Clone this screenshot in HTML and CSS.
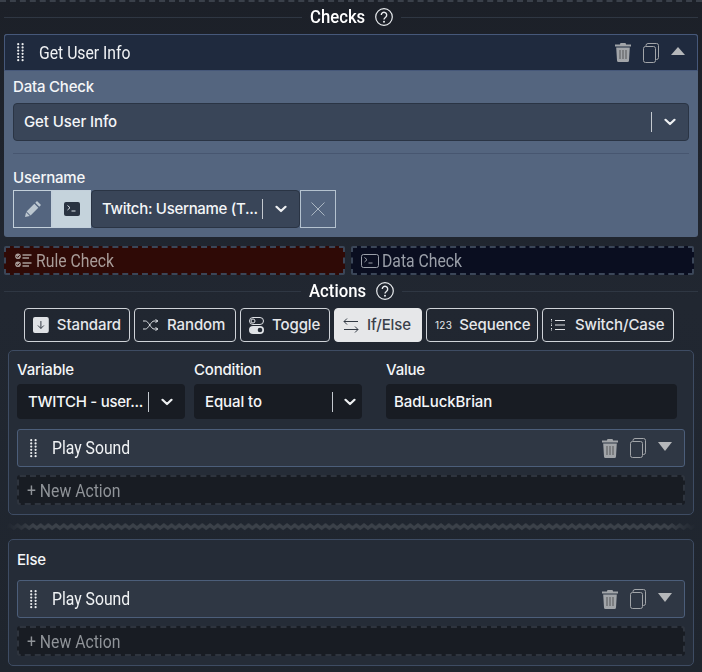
FILE: index.html
```html
<!DOCTYPE html>
<html lang="en">
<head>
<meta charset="utf-8">
<title>Checks and Actions</title>
<link rel="stylesheet" href="styles.css">
</head>
<body>
<svg class="defs" width="0" height="0" aria-hidden="true">
  <defs>
    <symbol id="grip" viewBox="0 0 7 19"><g fill="currentColor"><circle cx="1.200" cy="1.200" r="1.100"/><circle cx="1.200" cy="4.400" r="1.100"/><circle cx="1.200" cy="7.600" r="1.100"/><circle cx="1.200" cy="10.800" r="1.100"/><circle cx="1.200" cy="14" r="1.100"/><circle cx="1.200" cy="17.200" r="1.100"/><circle cx="5.600" cy="1.200" r="1.100"/><circle cx="5.600" cy="4.400" r="1.100"/><circle cx="5.600" cy="7.600" r="1.100"/><circle cx="5.600" cy="10.800" r="1.100"/><circle cx="5.600" cy="14" r="1.100"/><circle cx="5.600" cy="17.200" r="1.100"/></g></symbol>
    <symbol id="trash" viewBox="0 0 16 19"><path fill="currentColor" d="M5.500 0h5l.6 1.400H16v2H0v-2h4.900zM1.200 4.400h13.600l-.8 13a1.600 1.600 0 0 1-1.600 1.600H3.600A1.600 1.600 0 0 1 2 17.400z"/><path stroke="#00000066" stroke-width="1.200" d="M5 7v9M8 7v9M11 7v9"/></symbol>
    <symbol id="copy" viewBox="0 0 16 20"><g fill="none" stroke="currentColor" stroke-width="1"><rect x=".5" y="3.500" width="12" height="16" rx="2"/><path d="M3 3.300V2.500a2 2 0 0 1 2-2h8.500a2 2 0 0 1 2 2v12a2 2 0 0 1-2 2h-.8"/></g></symbol>
    <symbol id="chev" viewBox="0 0 12 8"><path fill="none" stroke="currentColor" stroke-width="2.200" stroke-linecap="round" stroke-linejoin="round" d="M1.500 1.800 6 6l4.500-4.200"/></symbol>
    <symbol id="help" viewBox="0 0 18 18"><circle cx="9" cy="9" r="8.300" fill="none" stroke="currentColor" stroke-width="1.200"/><path fill="none" stroke="currentColor" stroke-width="1.400" d="M6.300 7a2.700 2.700 0 1 1 4.300 2.200C9.600 9.900 9 10.400 9 11.600"/><circle cx="9" cy="13.700" r="1" fill="currentColor"/></symbol>
  </defs>
</svg>
<main class="page">
  <header class="section-title"><h2>Checks</h2><svg class="help"><use href="#help"/></svg></header>

  <section class="check">
    <div class="row-head dark">
      <svg class="grip"><use href="#grip"/></svg>
      <span class="cond-text">Get User Info</span>
      <span class="tools">
        <svg class="i-trash"><use href="#trash"/></svg>
        <svg class="i-copy"><use href="#copy"/></svg>
        <span class="caret up"></span>
      </span>
    </div>
    <div class="check-body">
      <label class="label">Data Check</label>
      <div class="select wide"><span class="select-value">Get User Info</span><span class="select-sep"></span><svg class="chev"><use href="#chev"/></svg></div>
      <hr class="rule">
      <label class="label">Username</label>
      <div class="input-group">
        <span class="mode">
          <svg width="18" height="18" viewBox="0 0 18 18"><path fill="#bcc7d0" d="M13 1l4 4-1.700 1.700-4-4zM10.300 3.700l4 4-7.700 7.700-4-4zM2.100 12.200l3.700 3.700-4.800 1.100z"/></svg>
        </span>
        <span class="mode active">
          <svg width="16" height="14" viewBox="0 0 16 14"><rect width="16" height="14" rx="2" fill="#2a3442"/><path d="M3.500 3.500 6 5.700 3.500 8M7.500 9h4" fill="none" stroke="#dfe6ec" stroke-width="1"/></svg>
        </span>
        <div class="select short"><span class="select-value compact">Twitch: Username (T...</span><span class="select-sep"></span><svg class="chev"><use href="#chev"/></svg></div>
        <span class="clear">
          <svg width="14" height="14" viewBox="0 0 14 14"><path d="M.5.500l13 13M13.500.500l-13 13" stroke="#aab6c2" stroke-width="1" fill="none"/></svg>
        </span>
      </div>
    </div>
  </section>

  <div class="drops">
    <div class="drop drop-rule">
      <svg width="17" height="15" viewBox="0 0 17 15"><g fill="#a89c98"><circle cx="3" cy="3.200" r="2.800"/><circle cx="3" cy="11.200" r="2.800"/></g><path d="M1.500 3.200 2.700 4.400 4.700 2.200M1.500 11.200l1.200 1.200 2-2.200" fill="none" stroke="#2f0a06"/><path d="M7.500 2h9M7.500 5h6.500M7.500 10h9M7.500 13h6.500" stroke="#a89c98" stroke-width="1.400"/></svg>
      <span class="cond-text">Rule Check</span>
    </div>
    <div class="drop drop-data">
      <svg width="18" height="14" viewBox="0 0 18 14"><rect x=".5" y=".5" width="17" height="13" rx="2" fill="none" stroke="#9a9fa8"/><path d="M3.500 3.500 6 5.700 3.500 8M7.500 9h4" fill="none" stroke="#9a9fa8"/></svg>
      <span class="cond-text">Data Check</span>
    </div>
  </div>

  <header class="section-title second"><h2>Actions</h2><svg class="help"><use href="#help"/></svg></header>

  <nav class="tabs">
    <button class="tab tab-standard">
      <svg width="16" height="16" viewBox="0 0 16 16"><rect width="16" height="16" rx="2" fill="#dfe2e6"/><path d="M8 4v7.500M5 8.500 8 11.500l3-3" fill="none" stroke="#333a44" stroke-width="1"/></svg>Standard
    </button>
    <button class="tab tab-random">
      <svg width="16" height="12" viewBox="0 0 16 12"><path d="M0 2h2.500c3 0 5.500 8 8.500 8h3M0 10h2.500c3 0 5.500-8 8.500-8h3M12.500.500 15 2l-2.500 1.500M12.500 8.500 15 10l-2.500 1.500" fill="none" stroke="#dfe2e6" stroke-width="1"/></svg>Random
    </button>
    <button class="tab tab-toggle">
      <svg width="15" height="17" viewBox="0 0 15 17"><rect x=".5" y=".5" width="14" height="7" rx="3.500" fill="none" stroke="#dfe2e6"/><circle cx="4" cy="4" r="2" fill="none" stroke="#dfe2e6"/><rect y="9" width="15" height="8" rx="4" fill="#dfe2e6"/><circle cx="11" cy="13" r="2.300" fill="#232a34"/></svg>Toggle
    </button>
    <button class="tab tab-ifelse selected">
      <svg width="16" height="15" viewBox="0 0 16 15"><path d="M15 3.500H1M4 .5 1 3.500l3 3M1 11.500h14M12 8.500l3 3-3 3" fill="none" stroke="#333a44" stroke-width="1"/></svg>If/Else
    </button>
    <button class="tab tab-sequence">
      <span class="num">123</span>Sequence
    </button>
    <button class="tab tab-switch">
      <svg width="14" height="12" viewBox="0 0 14 12"><path d="M4 1.500h10M4 6h10M4 10.500h10" stroke="#dfe2e6" stroke-width="1"/><path d="M.5 0v3M.5 4.500v3M.5 9v3" stroke="#dfe2e6" stroke-width="1" stroke-dasharray="1 .5"/></svg>Switch/Case
    </button>
  </nav>

  <section class="branch">
    <div class="fields">
      <div class="field f-var"><label class="label">Variable</label><div class="select black"><span class="select-value compact">TWITCH - user...</span><span class="select-sep"></span><svg class="chev"><use href="#chev"/></svg></div></div>
      <div class="field f-cond"><label class="label">Condition</label><div class="select black"><span class="select-value">Equal to</span><span class="select-sep"></span><svg class="chev"><use href="#chev"/></svg></div></div>
      <div class="field f-val"><label class="label">Value</label><div class="select black"><span class="select-value">BadLuckBrian</span></div></div>
    </div>
    <div class="row-head action">
      <svg class="grip"><use href="#grip"/></svg>
      <span class="cond-text">Play Sound</span>
      <span class="tools">
        <svg class="i-trash"><use href="#trash"/></svg>
        <svg class="i-copy"><use href="#copy"/></svg>
        <span class="caret down"></span>
      </span>
    </div>
    <div class="new-action"><span class="cond-text">+ New Action</span></div>
  </section>

  <svg class="zigzag" width="690" height="8" viewBox="0 0 690 8" aria-hidden="true">
    <defs>
      <pattern id="zig" width="7.700" height="8" patternUnits="userSpaceOnUse">
        <path d="M-1 5.800 3.850 2.200 8.700 5.800" fill="none" stroke="#3b4149" stroke-width="3.400"/>
      </pattern>
      <linearGradient id="zigfade"><stop offset="0" stop-color="#000"/><stop offset=".04" stop-color="#fff"/><stop offset=".96" stop-color="#fff"/><stop offset="1" stop-color="#000"/></linearGradient>
      <mask id="zigmask"><rect width="690" height="8" fill="url(#zigfade)"/></mask>
    </defs>
    <rect width="690" height="8" fill="url(#zig)" mask="url(#zigmask)"/>
  </svg>

  <section class="branch else">
    <label class="label else-label">Else</label>
    <div class="row-head action">
      <svg class="grip"><use href="#grip"/></svg>
      <span class="cond-text">Play Sound</span>
      <span class="tools">
        <svg class="i-trash"><use href="#trash"/></svg>
        <svg class="i-copy"><use href="#copy"/></svg>
        <span class="caret down"></span>
      </span>
    </div>
    <div class="new-action"><span class="cond-text">+ New Action</span></div>
  </section>
</main>
</body>
</html>
```

FILE: styles.css
```css
* { box-sizing: border-box; }
html, body { margin: 0; padding: 0; }
body {
  width: 702px;
  height: 672px;
  overflow: hidden;
  background: linear-gradient(#1c2028, #212731 45%, #1f252e);
  font-family: Inter, "Noto Sans", sans-serif;
  color: #fff;
}
.defs { position: absolute; }
.page {
  height: 672px;
  border-top: 2px dashed #3a404a;
  display: flex;
  flex-direction: column;
}

.section-title {
  height: 30px;
  margin-bottom: 2px;
  display: flex;
  align-items: center;
  gap: 8px;
  padding: 0 4px;
  flex: none;
}
.section-title::before, .section-title::after {
  content: "";
  flex: 1;
  height: 1px;
  background: #2f3743;
}
.section-title h2 {
  margin: 0;
  font: 500 19px/24px Roboto, sans-serif;
  width: 57px;
  white-space: nowrap;
  transform: scaleX(.88);
  transform-origin: left;
}
.second { height: 32px; margin-bottom: 1px; }
.second h2 { width: 59px; }
.help { width: 18px; height: 18px; color: #e8ebee; flex: none; }

.cond-text {
  display: inline-block;
  font: 400 18px/24px Roboto, sans-serif;
  transform: scaleX(.875);
  transform-origin: left;
  white-space: nowrap;
}

.check {
  margin: 0 4px;
  height: 203px;
  flex: none;
  background: #54657f;
  border-radius: 3px;
}
.row-head {
  display: flex;
  align-items: center;
  border-radius: 3px;
  border: 1px solid #46587a;
  color: #f0f2f4;
}
.dark {
  height: 37px;
  padding-left: 12px;
  background: #1f2a3e;
  border-radius: 3px 3px 0 0;
  gap: 15px;
}
.grip { width: 7px; height: 19px; color: #eceef0; flex: none; }
.tools {
  margin-left: auto;
  display: flex;
  align-items: center;
  gap: 12px;
  padding-right: 12px;
  color: #a2a5a9;
}
.i-trash { width: 16px; height: 19px; }
.i-copy { width: 16px; height: 20px; }
.caret { width: 0; height: 0; border-left: 7.500px solid transparent; border-right: 7.500px solid transparent; }
.caret.up { border-bottom: 8px solid #b5b7ba; margin-top: -4px; }
.caret.down { border-top: 9px solid #b5b7ba; margin-top: -4px; }

.check-body { padding: 6px 9px 0; }
.label {
  display: block;
  font: 500 15px/20px Inter, sans-serif;
  color: #f4f6f8;
  letter-spacing: -.2px;
}
.select {
  display: flex;
  align-items: center;
  height: 38px;
  background: #394558;
  border: 1px solid #2a3444;
  border-radius: 4px;
  padding: 0 12px 0 10px;
}
.wide { margin-top: 6px; }
.select-value {
  flex: 1;
  min-width: 0;
  white-space: nowrap;
  font: 500 15px/20px Inter, sans-serif;
  letter-spacing: -.1px;
  color: #f4f6f8;
}
.select-value.compact { letter-spacing: -.3px; }
.select-sep { width: 1px; height: 20px; background: #c4c9cf; margin-right: 12px; flex: none; }
.chev { width: 12px; height: 8px; color: #eef0f2; flex: none; }
.rule { margin: 12px 0 14px; border: 0; border-top: 1px solid #475670; }

.input-group { display: flex; height: 38px; margin-top: 2px; }
.mode {
  width: 39px;
  display: flex;
  align-items: center;
  justify-content: center;
  border: 1px solid #c3d0db;
  flex: none;
}
.mode.active { background: #c5d3dc; }
.select.short { width: 209px; flex: none; }
.clear {
  width: 36px;
  display: flex;
  align-items: center;
  justify-content: center;
  border: 1px solid #b4c2cf;
  flex: none;
}

.drops { display: flex; gap: 6px; margin: 9px 8px 0 4px; height: 29px; flex: none; }
.drop {
  display: flex;
  align-items: center;
  gap: 4px;
  padding-left: 9px;
  border: 2px dashed #3b4658;
  border-radius: 2px;
}
.drop-rule { width: 341px; background: #2f0a06; color: #a89c98; }
.drop-data { flex: 1; background: #0a0e20; color: #9a9fa8; padding-left: 8px; gap: 3px; }

.tabs { display: flex; gap: 4px; padding-left: 24px; flex: none; }
.tab {
  height: 34px;
  display: flex;
  align-items: center;
  gap: 8px;
  padding: 0 8px;
  background: transparent;
  border: 1px solid #cfd3d8;
  border-radius: 4px;
  color: #e6e8eb;
  font: 500 15px/20px Inter, sans-serif;
  letter-spacing: -.1px;
}
.tab-standard { width: 106px; }
.tab-random { width: 102px; }
.tab-toggle { width: 90px; }
.tab-ifelse { width: 88px; }
.tab-sequence { width: 112px; gap: 7px; }
.tab-switch { width: 132px; gap: 10px; }
.tab.selected { background: #e6e7e9; color: #3a404a; border-color: #e6e7e9; }
.num { font-size: 10px; letter-spacing: .3px; font-weight: 400; }

.branch {
  margin: 8px 8px 0;
  height: 165px;
  flex: none;
  background: #252c37;
  border: 1px solid #3e4c63;
  border-radius: 5px;
  padding: 9px 8px 0;
}
.fields { display: flex; height: 69px; }
.field { flex: none; }
.f-var { width: 177px; }
.f-cond { width: 192px; }
.f-val { width: 291px; }
.field .label { line-height: 20px; margin-bottom: 4px; }
.f-var .select { width: 168px; }
.f-cond .select { width: 168px; padding-right: 6px; }
.select.black { height: 35px; background: #181c23; border: 0; padding-left: 11px; }
.f-val .select.black { padding-left: 8px; }
.f-cond .select-sep { margin-right: 11px; }
.action {
  height: 38px;
  padding-left: 12px;
  gap: 15px;
  background: #2f3744;
  border-color: #4c5e7a;
}
.new-action {
  height: 30px;
  margin-top: 8px;
  padding: 2px 0 0 8px;
  display: flex;
  align-items: center;
  background: #181c23;
  border: 2px dashed #2e343e;
  border-radius: 3px;
  color: #8f9398;
}

.zigzag {
  flex: none;
  display: block;
  margin: 8px 0 8px 6px;
}

.branch.else { margin-top: 0; height: 127px; padding-top: 9px; }
.else-label { line-height: 22px; margin-bottom: 9px; }
```
